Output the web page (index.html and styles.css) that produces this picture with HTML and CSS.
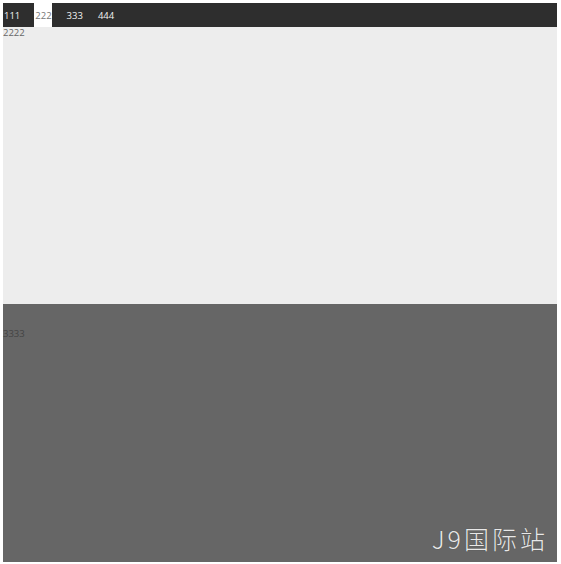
FILE: index.html
```html
<!DOCTYPE html>
<html lang="zh">
<head>
<meta charset="utf-8">
<title>Tabs</title>
<link rel="stylesheet" href="styles.css">
</head>
<body>
<div class="wrap">
  <ul class="nav">
    <li class="tab">111</li>
    <li class="tab active">222</li>
    <li class="tab">333</li>
    <li class="tab">444</li>
  </ul>
  <div class="panel light">2222</div>
  <div class="panel dark">3333</div>
  <div class="mark">J9国际站</div>
</div>
</body>
</html>
```
FILE: styles.css
```css
html, body {
  margin: 0;
  padding: 0;
  background: #fff;
}
body {
  padding: 3px 4px 0 3px;
  font-family: "Open Sans", "Noto Sans", "Noto Sans CJK SC", sans-serif;
  font-size: 9.5px;
}
.wrap {
  position: relative;
  width: 554px;
  display: flex;
  flex-direction: column;
}
.nav {
  list-style: none;
  margin: 0;
  padding: 0 0 0 1px;
  height: 24px;
  background: #2e2e2e;
  display: flex;
  align-items: stretch;
}
.tab {
  color: #f2f2f2;
  margin-right: 15px;
  line-height: 24px;
  padding-top: 1px;
  box-sizing: border-box;
}
.tab.active {
  background: #fff;
  color: #777;
  margin-left: -1px;
  padding-left: 1px;
}
.panel {
  padding-left: 0;
  color: #666;
}
.light {
  background: #ededed;
  height: 277px;
  line-height: 12px;
}
.dark {
  background: #666;
  color: #444;
  height: 258px;
  padding-top: 24px;
  box-sizing: border-box;
  line-height: 12px;
}
.mark {
  position: absolute;
  right: 9px;
  bottom: 6px;
  font-family: "Noto Sans CJK SC", sans-serif;
  font-weight: 300;
  font-size: 25px;
  color: #e8e8e8;
  letter-spacing: 3px;
  text-shadow: 0 0 1px rgba(0,0,0,0.35);
}
```
